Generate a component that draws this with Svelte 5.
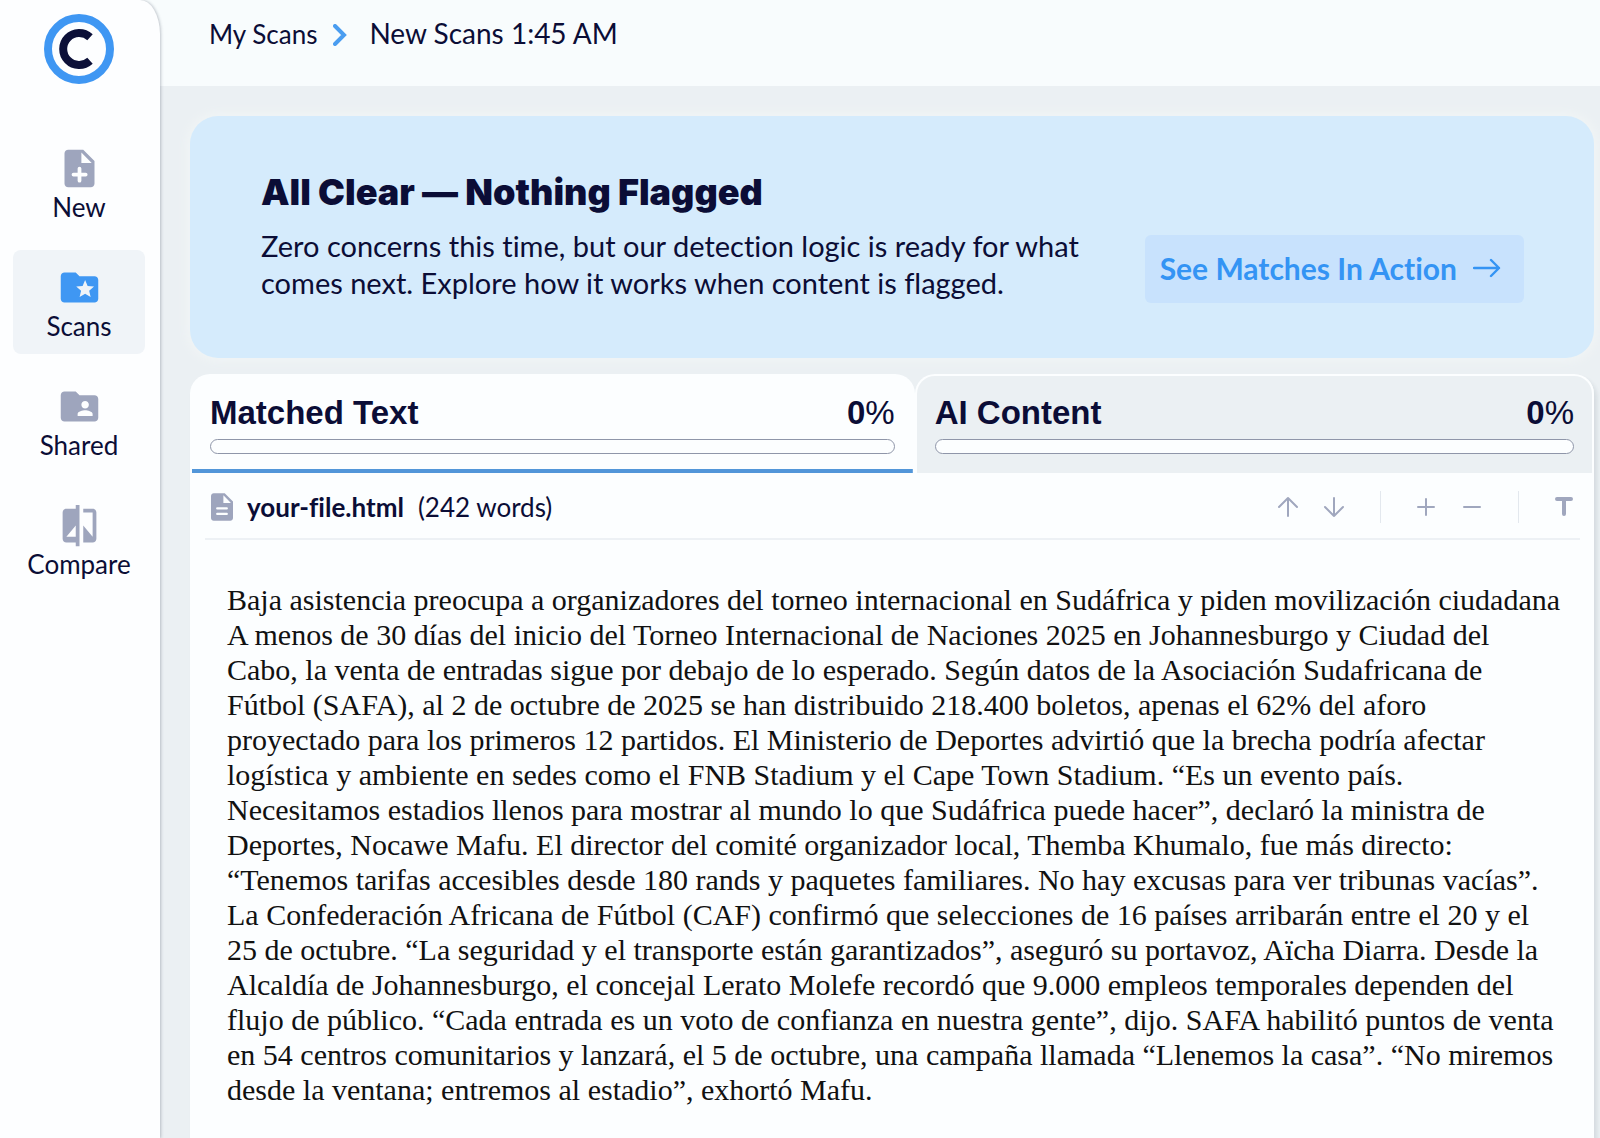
<script lang="ts">
  const folder =
    'M20 6h-8l-2-2H4c-1.1 0-2 .9-2 2v12c0 1.1.9 2 2 2h16c1.1 0 2-.9 2-2V8c0-1.1-.9-2-2-2z';

  const navItems = [
    { id: 'new', label: 'New' },
    { id: 'scans', label: 'Scans' },
    { id: 'shared', label: 'Shared' },
    { id: 'compare', label: 'Compare' }
  ];

  const tabs = [
    { id: 'matched', label: 'Matched Text', score: 0 },
    { id: 'ai', label: 'AI Content', score: 0 }
  ];

  const lines = [
    'Baja asistencia preocupa a organizadores del torneo internacional en Sudáfrica y piden movilización ciudadana',
    'A menos de 30 días del inicio del Torneo Internacional de Naciones 2025 en Johannesburgo y Ciudad del',
    'Cabo, la venta de entradas sigue por debajo de lo esperado. Según datos de la Asociación Sudafricana de',
    'Fútbol (SAFA), al 2 de octubre de 2025 se han distribuido 218.400 boletos, apenas el 62% del aforo',
    'proyectado para los primeros 12 partidos. El Ministerio de Deportes advirtió que la brecha podría afectar',
    'logística y ambiente en sedes como el FNB Stadium y el Cape Town Stadium. “Es un evento país.',
    'Necesitamos estadios llenos para mostrar al mundo lo que Sudáfrica puede hacer”, declaró la ministra de',
    'Deportes, Nocawe Mafu. El director del comité organizador local, Themba Khumalo, fue más directo:',
    '“Tenemos tarifas accesibles desde 180 rands y paquetes familiares. No hay excusas para ver tribunas vacías”.',
    'La Confederación Africana de Fútbol (CAF) confirmó que selecciones de 16 países arribarán entre el 20 y el',
    '25 de octubre. “La seguridad y el transporte están garantizados”, aseguró su portavoz, Aïcha Diarra. Desde la',
    'Alcaldía de Johannesburgo, el concejal Lerato Molefe recordó que 9.000 empleos temporales dependen del',
    'flujo de público. “Cada entrada es un voto de confianza en nuestra gente”, dijo. SAFA habilitó puntos de venta',
    'en 54 centros comunitarios y lanzará, el 5 de octubre, una campaña llamada “Llenemos la casa”. “No miremos',
    'desde la ventana; entremos al estadio”, exhortó Mafu.'
  ];

  let activeNav = $state('scans');
  let activeTab = $state('matched');
</script>

<div class="app">
  <aside class="sidebar">
    <a class="logo" href="#home" aria-label="Home">
      <svg viewBox="0 0 70 70" width="70" height="70" fill="none">
        <circle cx="35" cy="35" r="31" stroke="#3f97f3" stroke-width="8" />
        <path d="M46 23.2A16 16 0 1 0 46 46.8" stroke="#0c1038" stroke-width="8" />
      </svg>
    </a>
    <nav>
      {#each navItems as item}
        <a
          class="nav-item"
          class:active={activeNav === item.id}
          href="#{item.id}"
          onclick={() => (activeNav = item.id)}
        >
          <svg viewBox="0 0 24 24" width="45" height="45" fill="currentColor">
            {#if item.id === 'new'}
              <path
                fill-rule="evenodd"
                d="M14 2H6C4.9 2 4 2.9 4 4v16c0 1.1.9 2 2 2h12c1.1 0 2-.9 2-2V8zM13 3.5 18.5 9H13z"
              />
              <path class="cut" d="M12 12v6.5M8.8 15.2h6.5" />
            {:else if item.id === 'scans'}
              <path
                d="{folder}m-2.06 11L15 15.28 12.06 17l.78-3.33-2.59-2.24 3.41-.29L15 8l1.34 3.14 3.41.29-2.59 2.24.78 3.33z"
                fill-rule="evenodd"
              />
            {:else if item.id === 'shared'}
              <path
                d="{folder}m-5 3c1.1 0 2 .9 2 2s-.9 2-2 2-2-.9-2-2 .9-2 2-2zm4 8h-8v-1c0-1.33 2.67-2 4-2s4 .67 4 2v1z"
                fill-rule="evenodd"
              />
            {:else}
              <path
                d="M10 3H5c-1.1 0-2 .9-2 2v14c0 1.1.9 2 2 2h5v2h2V1h-2v2zm0 15H5l5-6v6zm9-15h-5v2h5v13l-5-6v9h5c1.1 0 2-.9 2-2V5c0-1.1-.9-2-2-2z"
              />
            {/if}
          </svg>
          <span>{item.label}</span>
        </a>
      {/each}
    </nav>
  </aside>

  <div class="page">
    <header class="breadcrumbs">
      <a href="#scans">My Scans</a>
      <svg viewBox="0 0 14 22" width="14" height="22" fill="none">
        <path d="M2 2l9 9-9 9" stroke="#4a9df0" stroke-width="4" stroke-linecap="round" />
      </svg>
      <span class="current">New Scans 1:45 AM</span>
    </header>

    <main>
      <section class="banner">
        <div class="message">
          <h1>All Clear — Nothing Flagged</h1>
          <p>
            Zero concerns this time, but our detection logic is ready for what<br />
            comes next. Explore how it works when content is flagged.
          </p>
        </div>
        <button class="action">
          See Matches In Action
          <svg viewBox="0 0 28 20" width="28" height="20" fill="none">
            <path
              d="M1 10h25M18 2l8 8-8 8"
              stroke="currentColor"
              stroke-width="2.4"
              stroke-linecap="round"
              stroke-linejoin="round"
            />
          </svg>
        </button>
      </section>

      <section class="report">
        <div class="tabs" role="tablist">
          {#each tabs as tab}
            <button
              class="tab"
              class:selected={activeTab === tab.id}
              role="tab"
              aria-selected={activeTab === tab.id}
              onclick={() => (activeTab = tab.id)}
            >
              <span class="tab-title">
                <span>{tab.label}</span>
                <span>{tab.score}<span class="percent">%</span></span>
              </span>
              <span class="track"><span class="fill" style="width: {tab.score}%"></span></span>
            </button>
          {/each}
        </div>

        <div class="document">
          <div class="toolbar">
            <div class="file">
              <svg viewBox="4 2 16 20" width="22" height="28" fill="#9ea5bd">
                <path
                  fill-rule="evenodd"
                  d="M14 2H6C4.9 2 4 2.9 4 4v16c0 1.1.9 2 2 2h12c1.1 0 2-.9 2-2V8zM13 3.5 18.5 9H13z"
                />
                <path d="M8.5 13h7M8.5 17h7" stroke="#fcfeff" stroke-width="1.6" stroke-linecap="round" />
              </svg>
              <strong>your-file.html</strong>
              <span>(242 words)</span>
            </div>
            <div class="tools">
              <button aria-label="Previous match">
                <svg viewBox="0 0 20 20"><path d="M10 19V1M1 10l9-9 9 9" /></svg>
              </button>
              <button aria-label="Next match">
                <svg viewBox="0 0 20 20"><path d="M10 1v18M1 10l9 9 9-9" /></svg>
              </button>
              <span class="divider"></span>
              <button aria-label="Zoom in">
                <svg viewBox="0 0 20 20"><path d="M10 2v16M2 10h16" /></svg>
              </button>
              <button aria-label="Zoom out">
                <svg viewBox="0 0 20 20"><path d="M2 10h16" /></svg>
              </button>
              <span class="divider"></span>
              <button aria-label="Text view">
                <svg viewBox="0 0 20 20"><path class="thick" d="M3 2h14M10 3v14" /></svg>
              </button>
            </div>
          </div>

          <article>
            {#each lines as line}
              {line}<br />
            {/each}
          </article>
        </div>
      </section>
    </main>
  </div>
</div>

<style>
  :global(body) {
    margin: 0;
    background: #ebf0f3;
  }

  .app {
    display: flex;
    min-height: 100vh;
    background: #f8fcfd;
    color: #0b0d36;
    font-family: Lato, 'Noto Sans', sans-serif;
    font-size: 26px;
    font-variant-ligatures: none;
    overflow: hidden;
  }

  a {
    color: inherit;
    text-decoration: none;
  }

  button {
    border: none;
    padding: 0;
    background: none;
    color: inherit;
    font: inherit;
    font-variant-ligatures: none;
    cursor: pointer;
  }

  svg {
    display: block;
    flex: none;
  }

  .sidebar {
    position: relative;
    display: flex;
    flex-direction: column;
    align-items: center;
    gap: 47px;
    box-sizing: border-box;
    width: 160px;
    flex: none;
    padding: 14px 15px 0 13px;
    background: #fdfeff;
    border-top-right-radius: 20px 34px;
    box-shadow: 1px 0 3px rgba(60, 70, 90, 0.3);
  }

  nav {
    display: flex;
    flex-direction: column;
    align-self: stretch;
    gap: 15px;
  }

  .nav-item {
    display: flex;
    flex-direction: column;
    align-items: center;
    box-sizing: border-box;
    height: 104px;
    padding-top: 15px;
    border-radius: 8px;
    line-height: 32px;
  }

  .nav-item svg {
    color: #9ea5bd;
  }

  .nav-item.active {
    background: #f0f4f8;
  }

  .nav-item.active svg {
    color: #3f97f3;
  }

  .cut {
    fill: none;
    stroke: #fdfeff;
    stroke-width: 2;
    stroke-linecap: round;
  }

  .page {
    flex: 1;
    min-width: 0;
    display: flex;
    flex-direction: column;
  }

  .breadcrumbs {
    display: flex;
    align-items: baseline;
    box-sizing: border-box;
    height: 86px;
    padding: 13px 49px 0;
    line-height: 40px;
  }

  .breadcrumbs svg {
    align-self: flex-start;
    margin: 11px 22px 0 16px;
  }

  .current {
    font-size: 28px;
  }

  main {
    flex: 1;
    display: flex;
    flex-direction: column;
    gap: 16px;
    padding: 30px 6px 0 30px;
    background: #ebf0f3;
  }

  .banner {
    display: flex;
    align-items: center;
    justify-content: space-between;
    box-sizing: border-box;
    min-height: 242px;
    padding: 0 70px 0 71px;
    border-radius: 28px;
    background: #d5ebfc;
    box-shadow: 0 0 8px 4px #f0f4f5;
  }

  h1 {
    margin: 0;
    font-family: Inter, sans-serif;
    font-size: 36px;
    font-weight: 900;
    line-height: 46px;
  }

  .message p {
    margin: 12px 0 4px;
    font-size: 29px;
    line-height: 37px;
  }

  .action {
    display: flex;
    align-items: center;
    align-self: flex-start;
    gap: 16px;
    box-sizing: border-box;
    height: 68px;
    margin-top: 119px;
    padding: 0 23px 2px 15px;
    border-radius: 6px;
    background: #c8e2fd;
    color: #3494f4;
    font-size: 30px;
    font-weight: 700;
    white-space: nowrap;
  }

  .report {
    flex: 1;
    display: flex;
    flex-direction: column;
    border-radius: 20px 20px 0 0;
    box-shadow: 3px 4px 4px rgba(60, 70, 90, 0.12);
  }

  .tabs {
    display: flex;
    background: linear-gradient(#ebf0f3 50%, #fcfeff 50%);
    border-radius: 20px 20px 0 0;
  }

  .tab {
    display: flex;
    flex-direction: column;
    flex: 678 1 0;
    box-sizing: border-box;
    height: 99px;
    padding: 15px 18px 0;
    border: 2px solid #fcfeff;
    border-bottom: 0;
    border-radius: 20px 20px 0 0;
    background: #ebf0f3;
  }

  .tab:first-child {
    flex-grow: 726;
  }

  .tab.selected {
    background: linear-gradient(#5296d9, #5296d9) bottom / 100% 4px no-repeat #fcfeff;
  }

  .tab-title {
    display: flex;
    justify-content: space-between;
    align-self: stretch;
    font-family: 'Liberation Sans', sans-serif;
    font-size: 33px;
    font-weight: 700;
    line-height: 44px;
  }

  .percent {
    font-weight: 400;
  }

  .track {
    align-self: stretch;
    box-sizing: border-box;
    height: 15px;
    margin-top: 4px;
    border: 1px solid #8f96a9;
    border-radius: 8px;
    background: #fcfeff;
    overflow: hidden;
  }

  .fill {
    display: block;
    height: 100%;
    background: #5296d9;
  }

  .document {
    flex: 1;
    padding: 0 14px 24px 15px;
    background: #fcfeff;
  }

  .toolbar {
    display: flex;
    align-items: center;
    justify-content: space-between;
    height: 62px;
    padding-top: 3px;
    border-bottom: 2px solid #edf1f5;
  }

  .file {
    display: flex;
    align-items: center;
    gap: 14px;
    padding-left: 6px;
  }

  .tools {
    display: flex;
    align-items: center;
    gap: 14px;
  }

  .tools > * {
    display: flex;
    justify-content: center;
    width: 32px;
    height: 32px;
    align-items: center;
  }

  .tools svg {
    width: 20px;
    height: 20px;
    fill: none;
    stroke: #a0a7be;
    stroke-width: 2;
    stroke-linecap: round;
    stroke-linejoin: round;
    overflow: visible;
  }

  .tools .thick {
    stroke-width: 4;
  }

  .divider::before {
    content: '';
    width: 1px;
    height: 32px;
    background: #e3e8ee;
  }

  article {
    padding: 42px 0 0 22px;
    color: #111;
    font-family: 'Liberation Serif', serif;
    font-size: 30px;
    line-height: 35px;
    white-space: nowrap;
  }
</style>
